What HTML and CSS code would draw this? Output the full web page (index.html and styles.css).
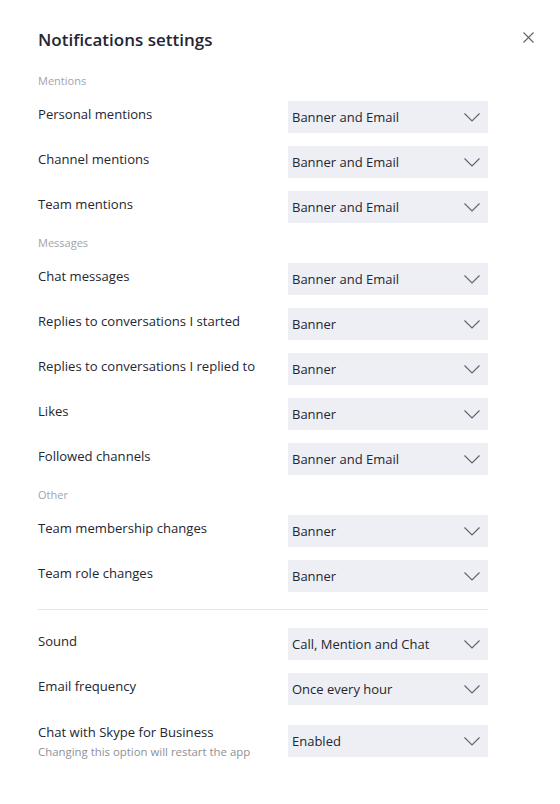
FILE: index.html
```html
<!DOCTYPE html>
<html lang="en">
<head>
<meta charset="utf-8">
<title>Notifications settings</title>
<link rel="stylesheet" href="styles.css">
</head>
<body>
<div class="dialog">
  <header class="head">
    <h1 class="title">Notifications settings</h1>
    <button class="close" aria-label="Close">
      <svg width="11" height="11" viewBox="0 0 11 11"><path d="M0.5 0.5 L10.5 10.5 M10.5 0.5 L0.5 10.5" stroke="#61636f" stroke-width="1.1" fill="none"/></svg>
    </button>
  </header>
  <div class="list">
    <div class="section">Mentions</div>
    <div class="row"><span class="label">Personal mentions</span><div class="select"><span class="value">Banner and Email</span><svg class="chev" width="16" height="9" viewBox="0 0 16 9"><path d="M0.5 0.5 L8 8 L15.5 0.5" stroke="#5f616d" stroke-width="1.1" fill="none"/></svg></div></div>
    <div class="row"><span class="label">Channel mentions</span><div class="select"><span class="value">Banner and Email</span><svg class="chev" width="16" height="9" viewBox="0 0 16 9"><path d="M0.5 0.5 L8 8 L15.5 0.5" stroke="#5f616d" stroke-width="1.1" fill="none"/></svg></div></div>
    <div class="row"><span class="label">Team mentions</span><div class="select"><span class="value">Banner and Email</span><svg class="chev" width="16" height="9" viewBox="0 0 16 9"><path d="M0.5 0.5 L8 8 L15.5 0.5" stroke="#5f616d" stroke-width="1.1" fill="none"/></svg></div></div>
    <div class="section">Messages</div>
    <div class="row"><span class="label">Chat messages</span><div class="select"><span class="value">Banner and Email</span><svg class="chev" width="16" height="9" viewBox="0 0 16 9"><path d="M0.5 0.5 L8 8 L15.5 0.5" stroke="#5f616d" stroke-width="1.1" fill="none"/></svg></div></div>
    <div class="row"><span class="label">Replies to conversations I started</span><div class="select"><span class="value">Banner</span><svg class="chev" width="16" height="9" viewBox="0 0 16 9"><path d="M0.5 0.5 L8 8 L15.5 0.5" stroke="#5f616d" stroke-width="1.1" fill="none"/></svg></div></div>
    <div class="row"><span class="label">Replies to conversations I replied to</span><div class="select"><span class="value">Banner</span><svg class="chev" width="16" height="9" viewBox="0 0 16 9"><path d="M0.5 0.5 L8 8 L15.5 0.5" stroke="#5f616d" stroke-width="1.1" fill="none"/></svg></div></div>
    <div class="row"><span class="label">Likes</span><div class="select"><span class="value">Banner</span><svg class="chev" width="16" height="9" viewBox="0 0 16 9"><path d="M0.5 0.5 L8 8 L15.5 0.5" stroke="#5f616d" stroke-width="1.1" fill="none"/></svg></div></div>
    <div class="row"><span class="label">Followed channels</span><div class="select"><span class="value">Banner and Email</span><svg class="chev" width="16" height="9" viewBox="0 0 16 9"><path d="M0.5 0.5 L8 8 L15.5 0.5" stroke="#5f616d" stroke-width="1.1" fill="none"/></svg></div></div>
    <div class="section">Other</div>
    <div class="row"><span class="label">Team membership changes</span><div class="select"><span class="value">Banner</span><svg class="chev" width="16" height="9" viewBox="0 0 16 9"><path d="M0.5 0.5 L8 8 L15.5 0.5" stroke="#5f616d" stroke-width="1.1" fill="none"/></svg></div></div>
    <div class="row"><span class="label">Team role changes</span><div class="select"><span class="value">Banner</span><svg class="chev" width="16" height="9" viewBox="0 0 16 9"><path d="M0.5 0.5 L8 8 L15.5 0.5" stroke="#5f616d" stroke-width="1.1" fill="none"/></svg></div></div>
    <hr class="divider">
    <div class="row"><span class="label">Sound</span><div class="select"><span class="value">Call, Mention and Chat</span><svg class="chev" width="16" height="9" viewBox="0 0 16 9"><path d="M0.5 0.5 L8 8 L15.5 0.5" stroke="#5f616d" stroke-width="1.1" fill="none"/></svg></div></div>
    <div class="row"><span class="label">Email frequency</span><div class="select"><span class="value">Once every hour</span><svg class="chev" width="16" height="9" viewBox="0 0 16 9"><path d="M0.5 0.5 L8 8 L15.5 0.5" stroke="#5f616d" stroke-width="1.1" fill="none"/></svg></div></div>
    <div class="row row-tall"><div class="label-block"><div class="label-main">Chat with Skype for Business</div><div class="label-sub">Changing this option will restart the app</div></div><div class="select"><span class="value">Enabled</span><svg class="chev" width="16" height="9" viewBox="0 0 16 9"><path d="M0.5 0.5 L8 8 L15.5 0.5" stroke="#5f616d" stroke-width="1.1" fill="none"/></svg></div></div>
  </div>
</div>
</body>
</html>
```

FILE: styles.css
```css
html, body {
  margin: 0;
  padding: 0;
  background: #ffffff;
}

body {
  font-family: "Open Sans", "Noto Sans", sans-serif;
  color: #252631;
}

.dialog {
  position: relative;
  width: 560px;
  height: 804px;
  box-sizing: border-box;
  padding: 0 72px 0 38px;
}

.head {
  padding-top: 28px;
}

.title {
  margin: 0;
  font-size: 17px;
  line-height: 24px;
  font-weight: 600;
  color: #242633;
}

.close {
  position: absolute;
  top: 32px;
  right: 26px;
  width: 11px;
  height: 11px;
  padding: 0;
  border: 0;
  background: none;
  display: flex;
}

.list {
  margin-top: 22px;
  display: flex;
  flex-direction: column;
  gap: 13px;
}

.section {
  font-size: 11px;
  line-height: 14px;
  color: #a2a3ab;
}

.row {
  display: flex;
  align-items: center;
  height: 32px;
}

.label {
  flex: none;
  width: 250px;
  font-size: 13.1px;
  line-height: 20px;
  padding-bottom: 6px;
}

.select {
  flex: none;
  width: 200px;
  height: 32px;
  box-sizing: border-box;
  background: #edeff4;
  display: flex;
  align-items: center;
  justify-content: space-between;
  padding: 0 8px 0 4px;
}

.value {
  font-size: 13px;
  line-height: 20px;
  color: #252631;
}

.chev {
  display: block;
  margin-top: 1px;
}

.divider {
  width: 100%;
  margin: 4px 0 5px;
  border: 0;
  border-top: 1px solid #e3e4e8;
  height: 0;
}

.row-tall {
  height: 46px;
}

.label-block {
  flex: none;
  width: 250px;
}

.label-main {
  font-size: 13.1px;
  line-height: 22px;
}

.label-sub {
  font-size: 11.4px;
  line-height: 18px;
  color: #8e8f98;
}
```
